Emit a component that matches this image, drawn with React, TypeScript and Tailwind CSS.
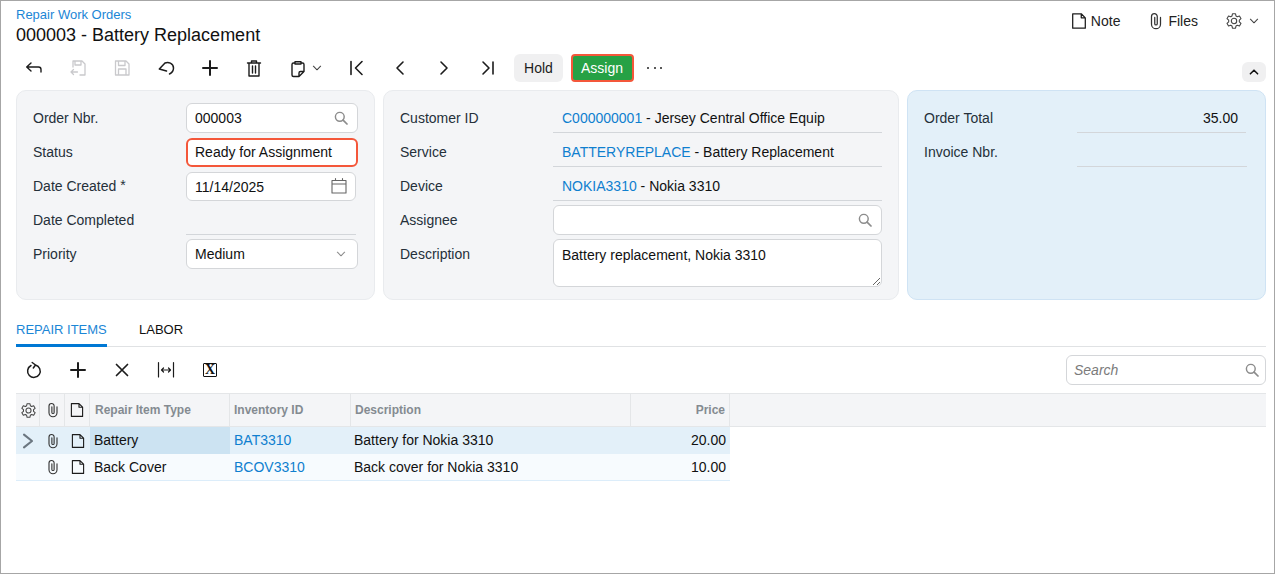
import type { ReactNode } from 'react'

const font = { fontFamily: '"Liberation Sans", Arial, sans-serif' }

const Ico = ({ children, size = 20, className = 'text-[#1c1c1c]', sw = 1.3 }: { children: ReactNode; size?: number; className?: string; sw?: number }) => (
  <svg width={size} height={size} viewBox="0 0 20 20" fill="none" stroke="currentColor" strokeWidth={sw} strokeLinecap="round" strokeLinejoin="round" className={`shrink-0 ${className}`}>
    {children}
  </svg>
)

const SearchIcon = () => (
  <Ico size={16} className="text-[#8c8c8c]" sw={1.8}>
    <circle cx="8.5" cy="8.5" r="5.5" />
    <path d="M12.6 12.6 L17.5 17.5" strokeWidth="2.2" />
  </Ico>
)

const PaperClip = ({ size = 16 }: { size?: number }) => (
  <Ico size={size} sw={1.4} className="text-[#333]">
    <path d="M15 6 V13.5 a5 5 0 0 1 -10 0 V5 a3.2 3.2 0 0 1 6.4 0 V13 a1.4 1.4 0 0 1 -2.8 0 V6" />
  </Ico>
)

const FileIcon = ({ size = 16 }: { size?: number }) => (
  <Ico size={size} sw={1.4} className="text-[#1c1c1c]">
    <path d="M3 2 H12.5 L17 6.5 V18 H3 Z M12.5 2 V6.5 H17" />
  </Ico>
)

const GearIcon = ({ size = 17 }: { size?: number }) => (
  <Ico size={size} sw={1.2} className="text-[#444]">
    <circle cx="10" cy="10" r="3" />
    <path d="M8.3 2 h3.4 l.5 2.4 1.5.9 2.4-.8 1.7 2.9-1.9 1.7 v1.8 l1.9 1.7 -1.7 2.9 -2.4-.8 -1.5.9 -.5 2.4 h-3.4 l-.5-2.4 -1.5-.9 -2.4.8 -1.7-2.9 1.9-1.7 v-1.8 l-1.9-1.7 1.7-2.9 2.4.8 1.5-.9 Z" />
  </Ico>
)

const Chevron = ({ className = 'text-[#444]' }: { className?: string }) => (
  <Ico size={12} sw={1.8} className={className}>
    <path d="M4 7 L10 13 L16 7" />
  </Ico>
)

const ToolBtn = ({ children }: { children: ReactNode }) => (
  <div className="flex h-7 w-11 items-center justify-center">{children}</div>
)

const Label = ({ children }: { children: ReactNode }) => (
  <div className="w-[153px] shrink-0 text-[#25303a]">{children}</div>
)

const Row = ({ label, children }: { label: ReactNode; children: ReactNode }) => (
  <div className="flex h-[34px] items-center">
    <Label>{label}</Label>
    {children}
  </div>
)

const Box = ({ children, className = '' }: { children?: ReactNode; className?: string }) => (
  <div className={`flex items-center justify-between rounded-[6px] border border-[#d4d6d9] bg-white pl-2 pr-[8px] ${className}`}>{children}</div>
)

const ReadField = ({ children, className = 'w-full' }: { children?: ReactNode; className?: string }) => (
  <div className={`flex h-[32px] items-center self-start border-b border-[#d3d6da] pl-[9px] pt-[4px] ${className}`}>{children}</div>
)

const Link = ({ children }: { children: ReactNode }) => <span className="text-[#0f7fcf]">{children}</span>

const HeadCell = ({ children, className = '' }: { children?: ReactNode; className?: string }) => (
  <div className={`flex items-center border-r border-[#e4e6e8] ${className}`}>{children}</div>
)

const gridCols = 'grid-cols-[24px_25px_25px_140px_121px_280px_99px]'

const items = [
  { type: 'Battery', id: 'BAT3310', desc: 'Battery for Nokia 3310', price: '20.00', active: true },
  { type: 'Back Cover', id: 'BCOV3310', desc: 'Back cover for Nokia 3310', price: '10.00', active: false },
]

export default function App() {
  return (
    <div style={font} className="h-[574px] w-[1275px] overflow-hidden border border-[#a6a6a6] bg-white text-[14px] text-[#111]">
      {/* Page title */}
      <div className="flex h-[53px] justify-between pl-[15px] pr-[14px]">
        <div>
          <div className="mt-[6px] text-[13px] leading-[16px] text-[#1b86d6]">Repair Work Orders</div>
          <div className="text-[18px] leading-[24px]">000003 - Battery Replacement</div>
        </div>
        <div className="flex h-[40px] items-center">
          <FileIcon size={18} />
          <span className="ml-[3px] text-[#222]">Note</span>
          <div className="ml-[27px]"><PaperClip size={18} /></div>
          <span className="ml-[3px] text-[#222]">Files</span>
          <div className="ml-[27px]"><GearIcon size={18} /></div>
          <div className="ml-[5px]"><Chevron /></div>
        </div>
      </div>

      {/* Main toolbar */}
      <div className="flex h-[28px] items-center justify-between pl-[11px] pr-[8px]">
        <div className="flex items-center">
          <ToolBtn><Ico sw={1.4}><path d="M7 5 L2.7 9 L7 13 M2.7 9 H14.5 a2.5 2.5 0 0 1 2.5 2.5 V14" /></Ico></ToolBtn>
          <ToolBtn>
            <Ico className="text-[#c9c9cc]">
              <path d="M5 9 V3 H14 L17 6 V17 H12 M7 3 V7 H13 V3 M9.5 14 H3 M5.5 11.5 L3 14 L5.5 16.5" />
            </Ico>
          </ToolBtn>
          <ToolBtn>
            <Ico className="text-[#c9c9cc]">
              <path d="M3.5 3 H14 L17 6 V17 H3.5 Z M6.5 3 V7.5 H13 V3 M6.5 17 V11 H14 V17" />
            </Ico>
          </ToolBtn>
          <ToolBtn><Ico sw={1.5}><path d="M3.3 11 L9 5 C12 3.5 17.5 5 17.5 10 C17.5 13 15.5 15 13.5 16 M3.3 11 L10.5 13" /></Ico></ToolBtn>
          <ToolBtn><Ico sw={2}><path d="M10 3 V17 M3 10 H17" /></Ico></ToolBtn>
          <ToolBtn><Ico sw={1.4}><path d="M3.5 5 H16.5 M7.5 5 V3 H12.5 V5 M5 5 V18 H15 V5 M8.5 8 V15 M11.5 8 V15" /></Ico></ToolBtn>
          <div className="flex h-7 w-[58px] items-center pl-[12px]">
            <Ico sw={1.4}>
              <path d="M7 5 H5.5 a1.5 1.5 0 0 0 -1.5 1.5 V17 a1.5 1.5 0 0 0 1.5 1.5 H11 L16 13.5 V6.5 a1.5 1.5 0 0 0 -1.5 -1.5 H13 M7 3.8 H13 V6 H7 Z M11 18.5 V15 a1.5 1.5 0 0 1 1.5 -1.5 H16" />
            </Ico>
            <div className="ml-[3px]"><Chevron /></div>
          </div>
          <ToolBtn><Ico sw={1.6}><path d="M5 3.5 V16.5 M16 3.5 L9.5 10 L16 16.5" /></Ico></ToolBtn>
          <ToolBtn><Ico sw={1.6}><path d="M13 4 L7 10 L13 16" /></Ico></ToolBtn>
          <ToolBtn><Ico sw={1.6}><path d="M7 4 L13 10 L7 16" /></Ico></ToolBtn>
          <ToolBtn><Ico sw={1.6}><path d="M15 4 V16 M5 4 L11 10 L5 16" /></Ico></ToolBtn>
          <div className="ml-[4px] flex h-7 w-[49px] items-center justify-center rounded-[6px] bg-[#f0f0f1] text-[#1c1c1c]">Hold</div>
          <div className="ml-[8px] flex h-7 w-[63px] items-center justify-center rounded-[4px] border-2 border-[#f4573a] bg-[#26a145] pr-[1px] text-white">Assign</div>
          <div className="ml-[13px] flex w-[15px] justify-between">
            <span className="size-[2px] rounded-full bg-[#222]" />
            <span className="size-[2px] rounded-full bg-[#222]" />
            <span className="size-[2px] rounded-full bg-[#222]" />
          </div>
        </div>
        <div className="mt-[8px] flex h-[20px] w-[24px] items-center justify-center rounded-[6px] bg-[#f0f0f1]">
          <Ico size={12} sw={2.6} className="rotate-180 text-[#111]"><path d="M4 7 L10 13 L16 7" /></Ico>
        </div>
      </div>

      {/* Form cards */}
      <div className="mt-[8px] flex gap-2 pl-[15px]">
        <div className="h-[210px] w-[359px] rounded-[10px] border border-[#e9ebee] bg-[#f4f5f7] pl-4 pt-[10px]">
          <Row label="Order Nbr.">
            <Box className="h-[30px] w-[172px]"><span>000003</span><SearchIcon /></Box>
          </Row>
          <Row label="Status">
            <Box className="h-[29px] w-[172px] border-2 border-[#f4573a] bg-transparent pl-[7px]"><span>Ready for Assignment</span></Box>
          </Row>
          <Row label={<>Date Created <span className="align-[1px]">*</span></>}>
            <Box className="h-[29px] w-[170px]">
              <span className="pt-[2px]">11/14/2025</span>
              <Ico size={20} sw={1.1} className="-mr-[2px] text-[#666]"><path d="M3 4.5 H17 V17 H3 Z M3 8 H17 M6.5 2.5 V4.5 M13.5 2.5 V4.5" /></Ico>
            </Box>
          </Row>
          <Row label="Date Completed"><ReadField className="w-[170px]" /></Row>
          <Row label="Priority">
            <Box className="h-[30px] w-[172px]"><span>Medium</span><Chevron className="mr-[2px] text-[#8c8c8c]" /></Box>
          </Row>
        </div>

        <div className="h-[210px] w-[516px] rounded-[10px] border border-[#e9ebee] bg-[#f4f5f7] pl-4 pt-[10px]">
          <div className="w-[482px]">
            <Row label="Customer ID"><ReadField><Link>C000000001</Link>&nbsp;- Jersey Central Office Equip</ReadField></Row>
            <Row label="Service"><ReadField><Link>BATTERYREPLACE</Link>&nbsp;- Battery Replacement</ReadField></Row>
            <Row label="Device"><ReadField><Link>NOKIA3310</Link>&nbsp;- Nokia 3310</ReadField></Row>
            <Row label="Assignee"><Box className="h-[30px] w-full justify-end"><SearchIcon /></Box></Row>
            <div className="flex">
              <div className="w-[153px] shrink-0 pt-[9px] leading-[16px] text-[#25303a]">Description</div>
              <textarea
                readOnly
                defaultValue="Battery replacement, Nokia 3310"
                className="mt-[2px] h-[48px] w-full rounded-[6px] border border-[#d4d6d9] bg-white px-2 pt-[7px] leading-[16px] text-[#111] outline-none"
              />
            </div>
          </div>
        </div>

        <div className="h-[210px] w-[359px] rounded-[10px] border border-[#cfe3f4] bg-[#e3f0f9] pl-4 pt-[10px]">
          <div className="w-[323px]">
            <Row label="Order Total">
              <ReadField className="w-[169px] justify-end border-[#c5d3e0] pr-2">35.00</ReadField>
            </Row>
            <Row label="Invoice Nbr."><ReadField className="w-[171px] border-[#c5d3e0]" /></Row>
          </div>
        </div>
      </div>

      {/* Tabs */}
      <div className="mx-[15px] mt-[20px] flex h-[27px] w-[1250px] border-b border-[#e0e2e4] text-[13px]">
        <div className="h-[27px] w-[91px] whitespace-nowrap border-b-[3px] border-[#0078d4] pt-[2px] leading-[16px] text-[#1b86d6]">REPAIR ITEMS</div>
        <div className="ml-[32px] pt-[2px] leading-[16px] text-[#111]">LABOR</div>
      </div>

      {/* Grid toolbar */}
      <div className="mt-[8px] flex h-[30px] items-center justify-between pl-[11px] pr-[8px]">
        <div className="flex items-center">
          <ToolBtn><Ico sw={1.5}><path d="M7 5.5 A6.3 6.3 0 1 0 11.5 5 M8.2 2.5 L11.5 5 L9.3 8" /></Ico></ToolBtn>
          <ToolBtn><Ico sw={2}><path d="M10 3 V17 M3 10 H17" /></Ico></ToolBtn>
          <ToolBtn><Ico sw={1.7}><path d="M4.5 4.5 L15.5 15.5 M15.5 4.5 L4.5 15.5" /></Ico></ToolBtn>
          <ToolBtn><Ico sw={1.2}><path d="M2.5 2.5 V17 M17.5 2.5 V17 M5.5 10 H14.5 M7.5 8 L5.5 10 L7.5 12 M12.5 8 L14.5 10 L12.5 12" /></Ico></ToolBtn>
          <ToolBtn>
            <div className="flex size-[14px] items-center justify-center rounded-[1px] border-[1.5px] border-[#111] font-['Liberation_Serif'] text-[14px] font-bold leading-none">X</div>
          </ToolBtn>
        </div>
        <div className="flex h-[30px] w-[200px] items-center justify-between rounded-[6px] border border-[#d4d6d9] pl-[7px] pr-[5px] italic text-[#7b7b7b]">
          Search
          <div className="not-italic"><SearchIcon /></div>
        </div>
      </div>

      {/* Grid */}
      <div className="ml-[15px] mt-[8px] w-[1250px]">
        <div className="flex h-[34px] border-y border-[#e4e6e8] bg-[#f4f5f7]">
          <div className={`grid ${gridCols}`}>
            <HeadCell className="justify-center pl-[1px]"><GearIcon /></HeadCell>
            <HeadCell className="justify-center pl-[1px]"><PaperClip /></HeadCell>
            <HeadCell className="justify-center"><FileIcon /></HeadCell>
            <HeadCell className="pl-[5px] text-[12px] font-bold text-[#848b91]">Repair Item Type</HeadCell>
            <HeadCell className="pl-[4px] text-[12px] font-bold text-[#848b91]">Inventory ID</HeadCell>
            <HeadCell className="pl-[4px] text-[12px] font-bold text-[#848b91]">Description</HeadCell>
            <HeadCell className="justify-end pr-[4px] text-[12px] font-bold text-[#848b91]">Price</HeadCell>
          </div>
        </div>
        {items.map((item) => (
          <div
            key={item.id}
            className={`grid h-[27px] w-[714px] items-center ${gridCols} ${item.active ? 'bg-[#e3f0f9]' : 'border-b border-[#dcedfa] bg-[#f7fbfe]'}`}
          >
            <div className="flex justify-center">
              {item.active && (
                <Ico size={16} sw={2.6} className="text-[#6b7680]"><path d="M5 2 L15 10 L5 18" /></Ico>
              )}
            </div>
            <div className="flex justify-center"><PaperClip /></div>
            <div className="flex justify-center"><FileIcon /></div>
            <div className={`flex h-full items-center pl-[4px] ${item.active ? 'bg-[#cce3f2]' : ''}`}>{item.type}</div>
            <div className="pl-[4px]"><Link>{item.id}</Link></div>
            <div className="pl-[3px]">{item.desc}</div>
            <div className="pr-[4px] text-right">{item.price}</div>
          </div>
        ))}
      </div>
    </div>
  )
}
